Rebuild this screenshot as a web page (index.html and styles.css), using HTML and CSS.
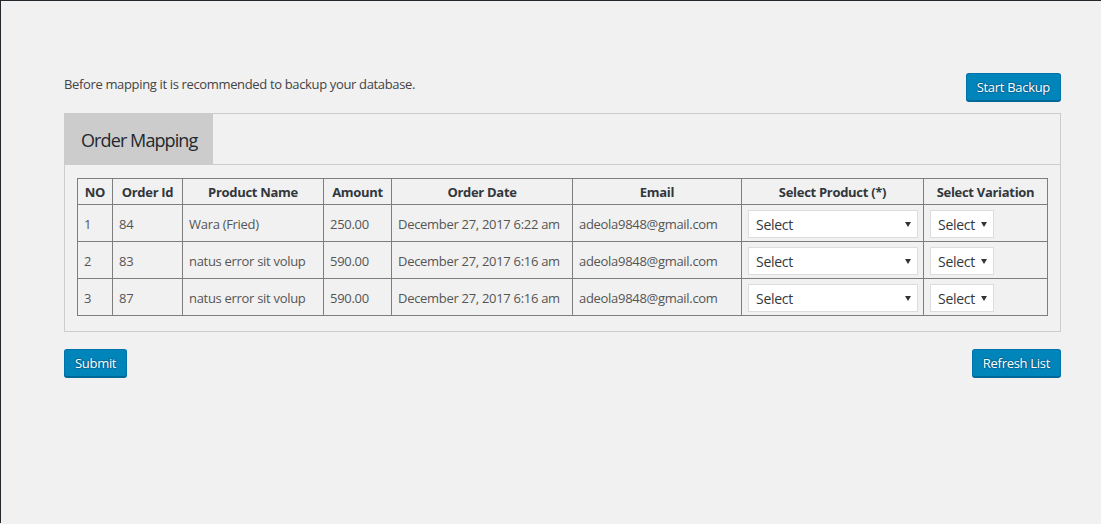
FILE: index.html
```html
<!DOCTYPE html>
<html>
<head>
<meta charset="utf-8">
<link rel="stylesheet" href="styles.css">
</head>
<body>
<span class="edge-mark edge-mark-1"></span>
<span class="edge-mark edge-mark-2"></span>
<div class="wrap">
  <div class="notice-row">
    <p class="notice">Before mapping it is recommended to backup your database.</p>
    <button class="btn">Start Backup</button>
  </div>
  <div class="panel">
    <div class="panel-head">
      <div class="tab">Order Mapping</div>
    </div>
    <div class="panel-body">
      <table class="map-table">
        <colgroup>
          <col class="c-no"><col class="c-id"><col class="c-name"><col class="c-amt"><col class="c-date"><col class="c-email"><col class="c-prod"><col class="c-var">
        </colgroup>
        <thead>
          <tr>
            <th>NO</th><th>Order Id</th><th>Product Name</th><th>Amount</th><th>Order Date</th><th>Email</th><th>Select Product (*)</th><th>Select Variation</th>
          </tr>
        </thead>
        <tbody>
          <tr>
            <td>1</td><td>84</td><td>Wara (Fried)</td><td>250.00</td><td>December 27, 2017 6:22 am</td><td>adeola9848@gmail.com</td>
            <td><span class="sel sel-prod">Select</span></td>
            <td><span class="sel sel-var">Select</span></td>
          </tr>
          <tr>
            <td>2</td><td>83</td><td>natus error sit volup</td><td>590.00</td><td>December 27, 2017 6:16 am</td><td>adeola9848@gmail.com</td>
            <td><span class="sel sel-prod">Select</span></td>
            <td><span class="sel sel-var">Select</span></td>
          </tr>
          <tr>
            <td>3</td><td>87</td><td>natus error sit volup</td><td>590.00</td><td>December 27, 2017 6:16 am</td><td>adeola9848@gmail.com</td>
            <td><span class="sel sel-prod">Select</span></td>
            <td><span class="sel sel-var">Select</span></td>
          </tr>
        </tbody>
      </table>
    </div>
  </div>
  <div class="actions">
    <button class="btn">Submit</button>
    <button class="btn">Refresh List</button>
  </div>
</div>
</body>
</html>
```

FILE: styles.css
```css
html, body {
  margin: 0;
  padding: 0;
}
body {
  background: #f1f1f1;
  border-top: 1px solid #23282d;
  border-left: 1px solid #23282d;
  height: 523px;
  box-sizing: border-box;
  font-family: "Open Sans", "Noto Sans", sans-serif;
  font-size: 13px;
  color: #444;
  position: relative;
}
.edge-mark {
  position: absolute;
  left: -1px;
  width: 1px;
  background: #0073aa;
}
.edge-mark-1 { top: 204px; height: 10px; }
.edge-mark-2 { top: 228px; height: 11px; }

.wrap {
  padding: 72px 40px 0 63px;
}
.notice-row {
  display: flex;
  justify-content: space-between;
  align-items: flex-start;
}
.notice {
  margin: 4px 0 0 0;
  line-height: 15px;
  letter-spacing: -0.35px;
}
.btn {
  font-family: inherit;
  font-size: 13px;
  letter-spacing: -0.3px;
  background: #0085ba;
  border: 1px solid #0073aa;
  border-bottom-color: #006799;
  box-shadow: 0 1px 0 #006799;
  color: #fff;
  text-shadow: 0 -1px 1px #006799, 1px 0 1px #006799, 0 1px 1px #006799, -1px 0 1px #006799;
  border-radius: 3px;
  height: 28px;
  line-height: 26px;
  padding: 0 10px;
  margin: 0;
  cursor: pointer;
}
.panel {
  margin-top: 12px;
  border: 1px solid #ccc;
}
.panel-head {
  display: flex;
  border-bottom: 1px solid #ccc;
  height: 50px;
}
.tab {
  background: #ccc;
  width: 148px;
  box-sizing: border-box;
  padding-left: 16px;
  font-size: 18px;
  letter-spacing: -0.9px;
  line-height: 53px;
  color: #23282d;
}
.panel-body {
  padding: 13px 13px 15px 12px;
}
.map-table {
  border-collapse: collapse;
  table-layout: fixed;
  width: 970px;
  border: 1px solid #7e7e7e;
  letter-spacing: -0.3px;
}
.c-no { width: 35px; }
.c-id { width: 70px; }
.c-name { width: 141px; }
.c-amt { width: 68px; }
.c-date { width: 181px; }
.c-email { width: 169px; }
.c-prod { width: 182px; }
.c-var { width: 124px; }
.map-table th,
.map-table td {
  border: 1px solid #7e7e7e;
  padding: 0 6px;
  white-space: nowrap;
  overflow: hidden;
}
.map-table th {
  height: 24px;
  padding-top: 1px;
  font-weight: 700;
  color: #32373c;
  text-align: center;
}
.map-table td {
  height: 35px;
  padding-top: 1px;
  color: #555;
  text-align: left;
}
.sel {
  display: block;
  position: relative;
  height: 28px;
  box-sizing: border-box;
  background: #fff;
  border: 1px solid #ddd;
  font-size: 14px;
  line-height: 28px;
  padding-left: 7px;
  color: #32373c;
}
.sel::after {
  content: "";
  position: absolute;
  top: 11px;
  right: 6px;
  border-left: 3px solid transparent;
  border-right: 3px solid transparent;
  border-top: 5px solid #333;
}
.sel-prod { width: 170px; }
.sel-var { width: 64px; }
.actions {
  display: flex;
  justify-content: space-between;
  margin-top: 17px;
}
```
